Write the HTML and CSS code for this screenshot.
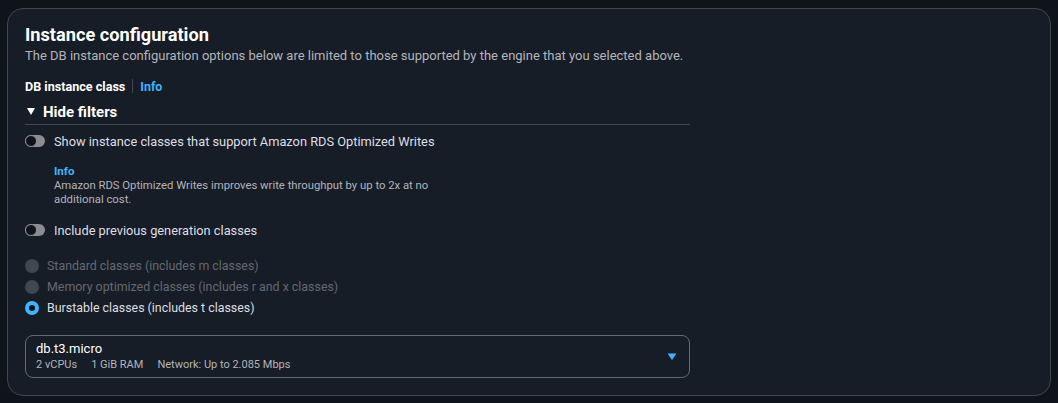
FILE: index.html
```html
<!DOCTYPE html>
<html lang="en">
<head>
<meta charset="utf-8">
<link rel="stylesheet" href="styles.css">
</head>
<body>
<section class="card">
  <h2 class="title">Instance configuration</h2>
  <p class="desc">The DB instance configuration options below are limited to those supported by the engine that you selected above.</p>
  <div class="field-label">
    <span class="label-text">DB instance class</span>
    <span class="sep"></span>
    <a class="info">Info</a>
  </div>
  <div class="filters">
    <div class="expander">
      <span class="caret-down"></span>
      <span>Hide filters</span>
    </div>
    <div class="toggle-row">
      <span class="toggle"><span class="knob"></span></span>
      <span class="toggle-label">Show instance classes that support Amazon RDS Optimized Writes</span>
    </div>
    <div class="toggle-desc">
      <a class="info">Info</a>
      <p>Amazon RDS Optimized Writes improves write throughput by up to 2x at no additional cost.</p>
    </div>
    <div class="toggle-row second">
      <span class="toggle"><span class="knob"></span></span>
      <span class="toggle-label">Include previous generation classes</span>
    </div>
    <div class="radios">
      <div class="radio-row disabled"><span class="radio"></span><span>Standard classes (includes m classes)</span></div>
      <div class="radio-row disabled"><span class="radio"></span><span>Memory optimized classes (includes r and x classes)</span></div>
      <div class="radio-row"><span class="radio checked"></span><span>Burstable classes (includes t classes)</span></div>
    </div>
    <div class="select">
      <div class="select-text">
        <div class="select-main">db.t3.micro</div>
        <div class="select-tags"><span>2 vCPUs</span><span>1 GiB RAM</span><span>Network: Up to 2.085 Mbps</span></div>
      </div>
      <svg class="select-caret" width="10" height="8" viewBox="0 0 10 8"><path d="M0.5 0.5 H9.5 L5 7 Z" fill="#42b4ff"/></svg>
    </div>
  </div>
</section>
</body>
</html>
```
FILE: styles.css
```css
* { box-sizing: border-box; }
html, body { margin: 0; padding: 0; }
body {
  background: #0f141a;
  font-family: Roboto, "Open Sans", sans-serif;
  color: #dedee3;
  width: 1058px;
  height: 403px;
  padding: 8px 7px 0 7px;
}
.card {
  background: #161d26;
  border: 1px solid #424650;
  border-radius: 16px;
  height: 388px;
  padding: 14px 17px 0 17px;
}
.title {
  margin: 0;
  font-size: 18.2px;
  line-height: 24px;
  font-weight: 700;
  color: #ffffff;
}
.desc {
  margin: 0;
  font-size: 13px;
  line-height: 18px;
  color: #b4b4bb;
}
.field-label {
  display: flex;
  align-items: center;
  margin-top: 11px;
  height: 20px;
}
.label-text {
  font-size: 12.6px;
  font-weight: 700;
  color: #ffffff;
}
.sep {
  width: 1px;
  height: 14px;
  background: #424650;
  margin: 0 7px;
}
.info {
  color: #42b4ff;
  font-size: 12.4px;
  font-weight: 700;
}
.filters { width: 665px; }
.expander {
  display: flex;
  align-items: center;
  gap: 8px;
  margin-top: 4px;
  font-size: 15px;
  font-weight: 700;
  color: #ffffff;
  border-bottom: 1px solid #424650;
  padding-bottom: 1px;
  height: 25px;
}
.caret-down {
  width: 0; height: 0;
  margin-left: 2px;
  border-left: 4.5px solid transparent;
  border-right: 4.5px solid transparent;
  border-top: 7px solid #ffffff;
}
.toggle-row {
  display: flex;
  align-items: center;
  gap: 9px;
  margin-top: 7px;
  height: 18px;
}
.toggle-row.second { margin-top: 14px; }
.toggle {
  width: 20px;
  height: 12px;
  border-radius: 6px;
  background: #8c8c94;
  position: relative;
  flex: none;
}
.knob {
  position: absolute;
  left: 0; top: 0;
  width: 12px;
  height: 12px;
  border-radius: 50%;
  background: #0f141a;
  border: 1px solid #8c8c94;
}
.toggle-label {
  font-size: 12.8px;
  color: #dedee3;
}
.toggle-desc {
  margin: 14px 0 0 29px;
  width: 385px;
}
.toggle-desc .info { display: block; font-size: 11.5px; line-height: 14px; }
.toggle-desc p {
  margin: 1px 0 0;
  font-size: 11.3px;
  line-height: 14px;
  color: #b4b4bb;
}
.radios { margin-top: 16px; }
.radio-row {
  display: flex;
  align-items: center;
  gap: 8px;
  height: 21px;
  font-size: 12.4px;
  color: #dedee3;
}
.radio-row.disabled { color: #656871; }
.radio {
  width: 14px;
  height: 14px;
  border-radius: 50%;
  background: #424650;
  flex: none;
}
.radio.checked {
  background: #0f141a;
  border: 4px solid #42b4ff;
}
.select {
  margin-top: 17px;
  height: 43px;
  border: 1px solid #656871;
  border-radius: 8px;
  display: flex;
  align-items: center;
  justify-content: space-between;
  padding: 0 12px 0 10px;
}
.select-main {
  font-size: 13px;
  line-height: 16px;
  color: #ffffff;
}
.select-tags {
  display: flex;
  gap: 14px;
  font-size: 11px;
  line-height: 15px;
  color: #b4b4bb;
}
.select-caret { margin-top: 1px; }
```
